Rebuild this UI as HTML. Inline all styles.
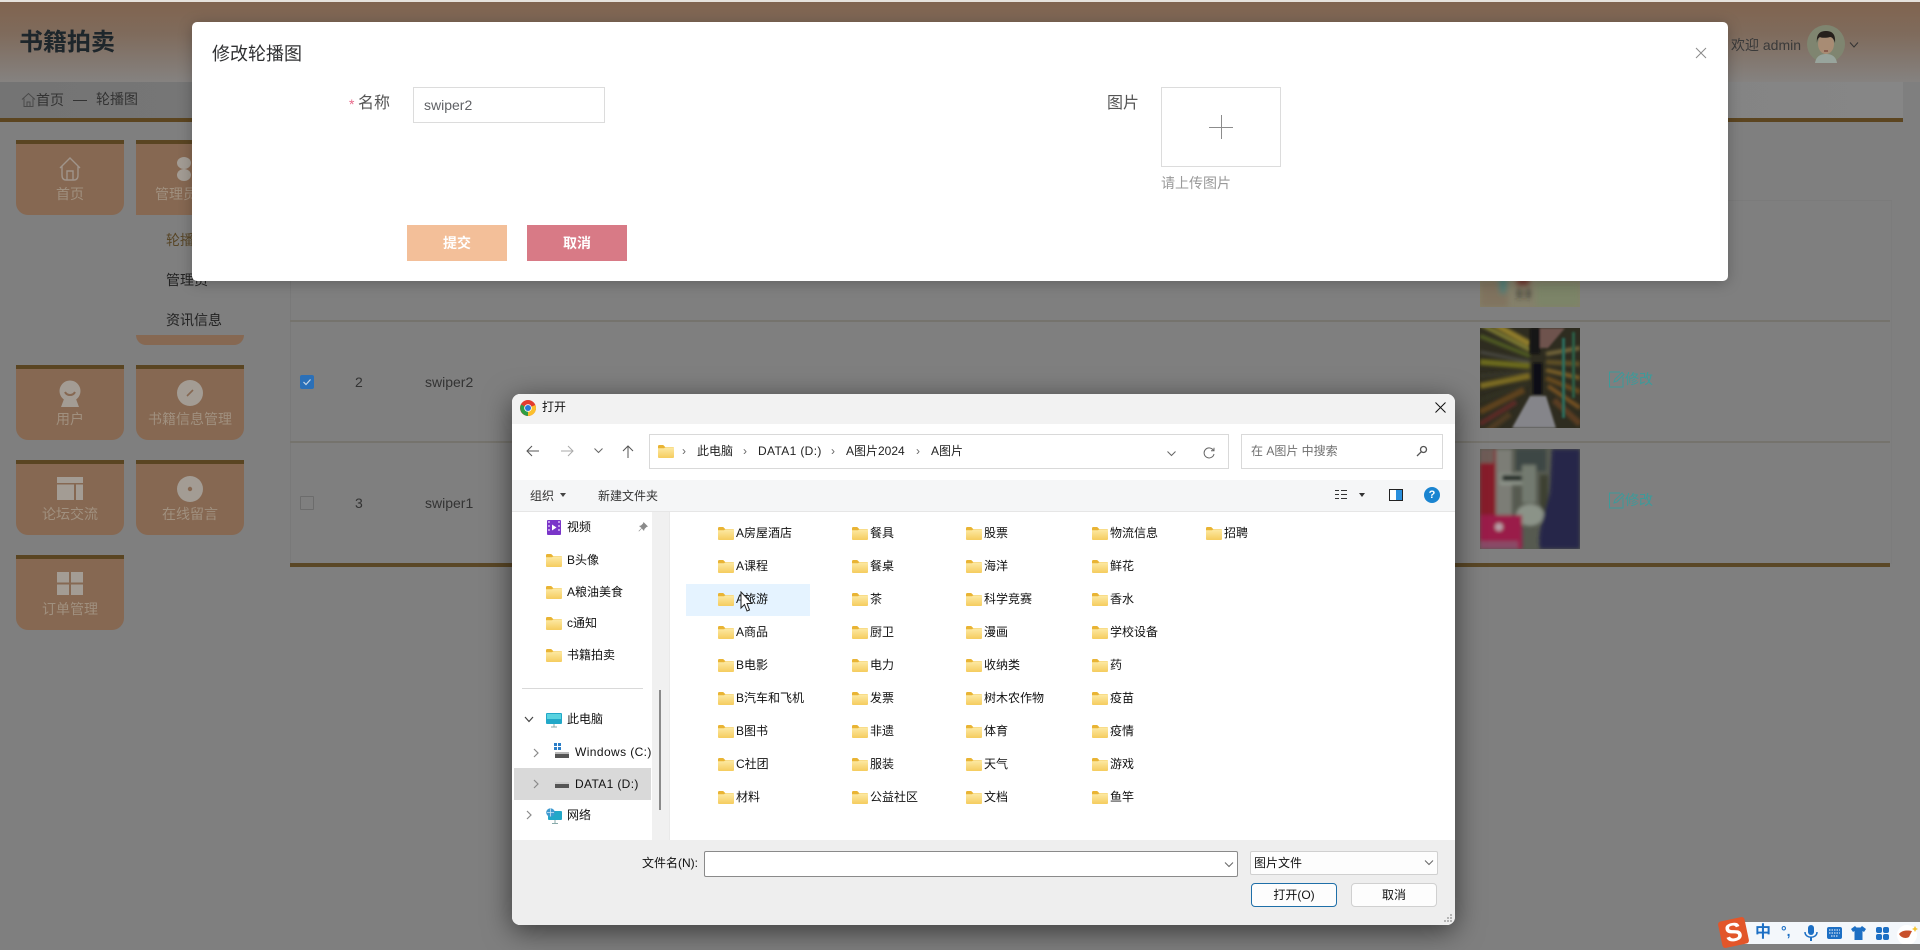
<!DOCTYPE html>
<html lang="zh"><head><meta charset="utf-8"><title>书籍拍卖</title>
<style>
*{box-sizing:border-box}
html,body{margin:0;padding:0}
body{width:1920px;height:944px;overflow:hidden;position:relative;background:#7f7f7f;font-family:"Liberation Sans","Noto Sans CJK SC",sans-serif;font-size:14px;color:#333}
.a{position:absolute}
.t{position:absolute;white-space:nowrap}
.tile{position:absolute;width:108px;height:75px;background:#866852;border-top:4px solid #5a4522;border-radius:0 0 12px 12px}
.tt{position:absolute;width:108px;text-align:center;color:#a0907f;font-size:14px;line-height:20px;white-space:nowrap}
.i{position:absolute;height:18px;line-height:18px;font-size:12px;color:#111;padding-left:18px;white-space:nowrap}
.i svg{position:absolute;left:0;top:3px;width:16px;height:13px}
.n{position:absolute;height:18px;line-height:18px;font-size:12px;color:#111;padding-left:21px;white-space:nowrap}
.n svg{position:absolute;left:0;top:3px;width:16px;height:13px}
.bc{position:absolute;font-size:12px;line-height:16px;color:#222;white-space:nowrap}
.sep{position:absolute;color:#666;font-size:12px;line-height:16px}
</style></head>
<body>
<svg width="0" height="0" style="position:absolute"><defs>
<linearGradient id="fg" x1="0" y1="0" x2="0" y2="1"><stop offset="0" stop-color="#fdeaa6"/><stop offset="1" stop-color="#f5cc5e"/></linearGradient>
<symbol id="fo" viewBox="0 0 16 13"><path d="M0 1.2C0 .5.5 0 1.2 0h4l2 2H15c.6 0 1 .4 1 1v1H0z" fill="#e9b434"/><path d="M0 3.2h6l1.5-1H16V12c0 .6-.4 1-1 1H1c-.6 0-1-.4-1-1z" fill="url(#fg)"/></symbol>
</defs></svg>

<!-- page background -->
<div class="a" style="left:0;top:0;width:1920px;height:2px;background:#e6e2dc"></div>
<div class="a" style="left:0;top:2px;width:1920px;height:80px;background:linear-gradient(180deg,#80644f 0%,#7f6b5c 40%,#858280 100%)"></div>
<div class="a" style="left:0;top:82px;width:1903px;height:36px;background:linear-gradient(90deg,#747474,#868686)"></div>
<div class="a" style="left:0;top:118px;width:1903px;height:4px;background:#5c4520"></div>
<div class="t" style="left:19px;top:26px;font-size:24px;font-weight:700;line-height:34px;color:#1e262b">书籍拍卖</div>
<svg class="a" style="left:21px;top:92px" width="15" height="16" viewBox="0 0 15 16" fill="none" stroke="#4a4a4a" stroke-width="1"><path d="M1 7.5 7.5 1.5 14 7.5M3 6.5V14.5H12V6.5M6 14.5V10H9V14.5"/></svg>
<div class="t" style="left:36px;top:90px;line-height:20px;color:#333">首页</div>
<div class="a" style="left:73px;top:100px;width:14px;height:1px;background:#333"></div>
<div class="t" style="left:96px;top:89px;line-height:20px;color:#333">轮播图</div>
<div class="t" style="left:1731px;top:35px;line-height:20px;color:#3a3a3a;font-size:14px">欢迎 admin</div>
<svg class="a" style="left:1807px;top:25px" width="38" height="38" viewBox="0 0 38 38"><circle cx="19" cy="19" r="19" fill="#7f8570"/><path d="M8 38c1-7 6-9 11-9s10 2 11 9z" fill="#98a49c"/><ellipse cx="19" cy="19" rx="8" ry="10" fill="#a88c74"/><path d="M10 18C9 8 14 6 19 6s10 2 9 12c-1-4-3-6-5-6-3 1-9 1-10 0-2 1-3 3-3 6z" fill="#26201c"/><path d="M17 26h4" stroke="#6a3028"/></svg>
<svg class="a" style="left:1849px;top:41px" width="10" height="8" viewBox="0 0 10 8" fill="none" stroke="#333"><path d="M1 1.5 5 6 9 1.5"/></svg>

<!-- sidebar -->
<div class="tile" style="left:16px;top:140px"></div>
<svg class="a" style="left:57px;top:156px" width="26" height="26" viewBox="0 0 26 26" fill="none" stroke="#a0948a" stroke-width="1.4"><path d="M3 12 13 2l10 10M5 10v9c0 3 1 5 4 5h8c3 0 4-2 4-5v-9M10 24v-9h6v9"/></svg>
<div class="tt" style="left:16px;top:184px">首页</div>
<div class="tile" style="left:136px;top:140px;border-radius:0"></div>
<div class="a" style="left:177px;top:157px;width:14px;height:12px;border-radius:50%;background:#a39c94"></div>
<div class="a" style="left:177px;top:169px;width:14px;height:12px;border-radius:50%;background:#a39c94"></div>
<div class="tt" style="left:136px;top:184px">管理员管理</div>
<div class="a" style="left:136px;top:335px;width:108px;height:10px;background:#866852;border-radius:0 0 12px 12px"></div>
<div class="t" style="left:166px;top:230px;line-height:20px;color:#584627">轮播图</div>
<div class="t" style="left:166px;top:270px;line-height:20px;color:#222">管理员</div>
<div class="t" style="left:166px;top:310px;line-height:20px;color:#222">资讯信息</div>

<div class="tile" style="left:16px;top:365px"></div>
<svg class="a" style="left:58px;top:380px" width="24" height="28" viewBox="0 0 24 28"><circle cx="12" cy="11" r="10.5" fill="#a39c94"/><path d="M6 19 3 27h18l-3-8z" fill="#a39c94"/><path d="M7 12c2 4 8 4 10 0" stroke="#866852" stroke-width="2" fill="none"/></svg>
<div class="tt" style="left:16px;top:409px">用户</div>
<div class="tile" style="left:136px;top:365px"></div>
<svg class="a" style="left:177px;top:380px" width="26" height="26" viewBox="0 0 26 26"><circle cx="13" cy="13" r="13" fill="#a39c94"/><path d="M10 16 16 10" stroke="#866852" stroke-width="1.6"/></svg>
<div class="tt" style="left:136px;top:409px">书籍信息管理</div>

<div class="tile" style="left:16px;top:460px"></div>
<svg class="a" style="left:57px;top:477px" width="26" height="23" viewBox="0 0 26 23" fill="#a39c94"><rect width="26" height="6"/><rect y="7.5" width="17" height="15.5"/><rect x="19" y="7.5" width="7" height="15.5"/></svg>
<div class="tt" style="left:16px;top:504px">论坛交流</div>
<div class="tile" style="left:136px;top:460px"></div>
<svg class="a" style="left:177px;top:476px" width="26" height="26" viewBox="0 0 26 26"><circle cx="13" cy="13" r="13" fill="#a39c94"/><circle cx="13" cy="13" r="2.2" fill="#866852"/></svg>
<div class="tt" style="left:136px;top:504px">在线留言</div>

<div class="tile" style="left:16px;top:555px"></div>
<svg class="a" style="left:57px;top:572px" width="26" height="23" viewBox="0 0 26 23" fill="#a39c94"><rect width="12" height="10.5"/><rect x="14" width="12" height="10.5"/><rect y="12.5" width="12" height="10.5"/><rect x="14" y="12.5" width="12" height="10.5"/></svg>
<div class="tt" style="left:16px;top:599px">订单管理</div>

<!-- table -->
<div class="a" style="left:290px;top:200px;width:1px;height:364px;background:#797979"></div>
<div class="a" style="left:1891px;top:200px;width:1px;height:364px;background:#7c7c7c"></div>
<div class="a" style="left:1728px;top:200px;width:164px;height:1px;background:#7b7b7b"></div>
<div class="a" style="left:290px;top:320px;width:1600px;height:2px;background:#75736d"></div>
<div class="a" style="left:290px;top:441px;width:1600px;height:2px;background:#75736d"></div>
<div class="a" style="left:290px;top:563px;width:1600px;height:4px;background:#5a4726"></div>

<div class="a" style="left:300px;top:375px;width:14px;height:14px;background:#2b70b8;border-radius:2px"></div>
<svg class="a" style="left:300px;top:375px" width="14" height="14" viewBox="0 0 14 14" fill="none" stroke="#c8d8e8" stroke-width="1.2"><path d="M3.5 7 6 9.5 10.5 4.5"/></svg>
<div class="a" style="left:300px;top:496px;width:14px;height:14px;border:1px solid #6c6c6c;border-radius:1px"></div>
<div class="t" style="left:355px;top:372px;line-height:20px;color:#333">2</div>
<div class="t" style="left:355px;top:493px;line-height:20px;color:#333">3</div>
<div class="t" style="left:425px;top:372px;line-height:20px;color:#333">swiper2</div>
<div class="t" style="left:425px;top:493px;line-height:20px;color:#333">swiper1</div>

<!-- thumbs -->
<svg class="a" style="left:1480px;top:207px" width="100" height="100" viewBox="0 0 100 100"><defs><filter id="b1" x="-10%" y="-10%" width="120%" height="120%"><feGaussianBlur stdDeviation="3"/></filter><clipPath id="c1"><rect width="100" height="100"/></clipPath></defs><g clip-path="url(#c1)"><rect width="100" height="100" fill="#84806a"/><g filter="url(#b1)"><rect x="0" y="74" width="28" height="26" fill="#80735f"/><rect x="56" y="76" width="44" height="24" fill="#7c8468"/><ellipse cx="23" cy="76" rx="4" ry="12" fill="#4f8078"/><rect x="37" y="70" width="12" height="8" fill="#70302a"/><rect x="38" y="82" width="3" height="9" fill="#2b2620"/><rect x="47" y="82" width="3" height="9" fill="#2b2620"/></g></g></svg>

<svg class="a" style="left:1480px;top:328px" width="100" height="100" viewBox="0 0 100 100"><defs><filter id="b2" x="-10%" y="-10%" width="120%" height="120%"><feGaussianBlur stdDeviation="1.6"/></filter><filter id="b2b" x="-10%" y="-10%" width="120%" height="120%"><feGaussianBlur stdDeviation="1"/></filter><clipPath id="c2"><rect width="100" height="100"/></clipPath></defs><g clip-path="url(#c2)"><rect width="100" height="100" fill="#2e2c20"/><g filter="url(#b2)" fill="none" stroke-width="4"><path d="M0 -4 50 22" stroke="#7d7a30"/><path d="M14 -4 50 16" stroke="#8f7c2a" stroke-width="6"/><path d="M0 8 50 28" stroke="#505c24"/><path d="M0 24 50 34" stroke="#4a4a42" stroke-width="3"/><path d="M0 34 50 38" stroke="#6c6a1e" stroke-width="6"/><path d="M0 48 50 44" stroke="#39382a" stroke-width="3"/><path d="M0 58 50 48" stroke="#7a6a20" stroke-width="6"/><path d="M0 72 48 56" stroke="#333224" stroke-width="3"/><path d="M0 84 44 62" stroke="#5f421e" stroke-width="6"/><path d="M0 96 36 74" stroke="#5c2a26" stroke-width="5"/><path d="M0 108 30 86" stroke="#4d3a20" stroke-width="6"/><path d="M100 20 66 26" stroke="#75663a"/><path d="M100 36 66 34" stroke="#5f5026" stroke-width="5"/><path d="M100 50 66 42" stroke="#7a5e26"/><path d="M100 64 66 50" stroke="#66481f" stroke-width="5"/><path d="M100 80 68 58" stroke="#785222"/><path d="M100 96 74 72" stroke="#5c3e20" stroke-width="6"/></g><g filter="url(#b2b)"><path d="M32 100 50 68H66L76 100z" fill="#85858a"/><path d="M50 0H60V26H50z" fill="#141416"/><path d="M60 0H85L68 20H60z" fill="#6e524e"/><path d="M82 10h3V90h-3z" fill="#2b6e5e"/><path d="M92 4h3V70h-3z" fill="#2a5e46"/><rect x="53" y="35" width="9" height="32" fill="#101014"/></g></g></svg>

<svg class="a" style="left:1480px;top:449px" width="100" height="100" viewBox="0 0 100 100"><defs><filter id="b3" x="-10%" y="-10%" width="120%" height="120%"><feGaussianBlur stdDeviation="1.8"/></filter><clipPath id="c3"><rect width="100" height="100"/></clipPath></defs><g clip-path="url(#c3)"><rect width="100" height="100" fill="#565a50"/><g filter="url(#b3)"><rect x="0" y="0" width="16" height="70" fill="#861c2c"/><rect x="0" y="0" width="14" height="14" fill="#6e5c56"/><rect x="16" y="0" width="16" height="70" fill="#7c7d76"/><rect x="36" y="0" width="30" height="22" fill="#3c4644"/><rect x="20" y="24" width="26" height="12" fill="#8e948a"/><rect x="22" y="26" width="20" height="6" fill="#1a2624"/><rect x="42" y="16" width="14" height="38" fill="#737a70"/><rect x="60" y="26" width="8" height="40" fill="#3c4030"/><ellipse cx="50" cy="66" rx="14" ry="11" fill="#8b9388"/><path d="M72 0h28v100H60C56 80 68 60 70 40z" fill="#26264a"/><rect x="0" y="66" width="42" height="34" fill="#9a1c48"/><rect x="0" y="92" width="38" height="8" fill="#8a4a66"/><circle cx="19" cy="78" r="4" fill="#b8a0a8"/></g></g></svg>

<svg class="a" style="left:1608px;top:371px" width="17" height="17" viewBox="0 0 17 17" fill="none" stroke="#3d9a9a" stroke-width="1"><path d="M12 1H1.500V16H15V6"/><path d="M6 11 7 8 14 1.500 16 3.500 9 10z"/></svg>
<div class="t" style="left:1625px;top:369px;line-height:20px;color:#3d9a9a">修改</div>
<svg class="a" style="left:1608px;top:492px" width="17" height="17" viewBox="0 0 17 17" fill="none" stroke="#3d9a9a" stroke-width="1"><path d="M12 1H1.500V16H15V6"/><path d="M6 11 7 8 14 1.500 16 3.500 9 10z"/></svg>
<div class="t" style="left:1625px;top:490px;line-height:20px;color:#3d9a9a">修改</div>

<!-- modal -->
<div class="a" style="left:192px;top:22px;width:1536px;height:259px;background:#fff;border-radius:5px;box-shadow:0 2px 14px rgba(0,0,0,.25)"></div>
<div class="t" style="left:212px;top:41px;font-size:18px;line-height:26px;color:#303133">修改轮播图</div>
<svg class="a" style="left:1695px;top:47px" width="12" height="12" viewBox="0 0 12 12" stroke="#8a8a8a" stroke-width="1"><path d="M1 1 11 11M11 1 1 11"/></svg>
<div class="t" style="left:349px;top:96px;line-height:16px;color:#e8698a;font-size:14px">*</div>
<div class="t" style="left:358px;top:93px;font-size:16px;line-height:22px;color:#555">名称</div>
<div class="a" style="left:413px;top:87px;width:192px;height:36px;border:1px solid #dcdcdc;background:#fff"></div>
<div class="t" style="left:424px;top:95px;line-height:20px;color:#606266">swiper2</div>
<div class="a" style="left:407px;top:225px;width:100px;height:36px;background:#f3bf99;color:#fff;font-weight:700;font-size:14px;line-height:36px;text-align:center">提交</div>
<div class="a" style="left:527px;top:225px;width:100px;height:36px;background:#d87a86;color:#fff;font-weight:700;font-size:14px;line-height:36px;text-align:center">取消</div>
<div class="t" style="left:1107px;top:93px;font-size:16px;line-height:22px;color:#555">图片</div>
<div class="a" style="left:1161px;top:87px;width:120px;height:80px;border:1px solid #dcdcdc;background:#fff"></div>
<div class="a" style="left:1209px;top:127px;width:24px;height:1px;background:#8c8c8c"></div>
<div class="a" style="left:1221px;top:115px;width:1px;height:24px;background:#8c8c8c"></div>
<div class="t" style="left:1161px;top:173px;line-height:20px;color:#999">请上传图片</div>

<!-- file dialog -->
<div class="a" style="left:512px;top:394px;width:943px;height:531px;background:#fff;border-radius:8px;box-shadow:0 6px 28px rgba(0,0,0,.55);overflow:hidden">
<div class="a" style="left:0;top:0;width:943px;height:30px;background:#f2f2f2"></div>
<div class="a" style="left:0;top:86px;width:943px;height:32px;background:#f5f6f7;border-bottom:1px solid #e6e6e6"></div>
<div class="a" style="left:140px;top:118px;width:18px;height:328px;background:#f0f0f0;border-right:1px solid #e9e9e9"></div>
<div class="a" style="left:147px;top:296px;width:2px;height:120px;background:#8a8a8a"></div>
<div class="a" style="left:0;top:446px;width:943px;height:85px;background:#eeeeee"></div>
</div>
<!-- chrome icon -->
<svg class="a" style="left:520px;top:400px" width="16" height="16" viewBox="0 0 16 16"><circle cx="8" cy="8" r="8" fill="#e33b2e"/><path d="M8 8 1 4.500A8 8 0 0 0 8 16z" fill="#2f9e44"/><path d="M8 8V16A8 8 0 0 0 15.400 5z" fill="#fbc02d"/><circle cx="8" cy="8" r="3.800" fill="#fff"/><circle cx="8" cy="8" r="3" fill="#2b78d8"/></svg>
<div class="t" style="left:542px;top:399px;font-size:12px;line-height:16px;color:#111">打开</div>
<svg class="a" style="left:1435px;top:402px" width="11" height="11" viewBox="0 0 11 11" stroke="#111" stroke-width="1"><path d="M.5.5 10.500 10.500M10.500.5.5 10.500"/></svg>

<!-- nav arrows -->
<svg class="a" style="left:526px;top:445px" width="13" height="12" viewBox="0 0 13 12" fill="none" stroke="#555" stroke-width="1"><path d="M6 1 1 6l5 5M1 6h12"/></svg>
<svg class="a" style="left:561px;top:445px" width="13" height="12" viewBox="0 0 13 12" fill="none" stroke="#aaa" stroke-width="1"><path d="M7 1l5 5-5 5M12 6H0"/></svg>
<svg class="a" style="left:594px;top:448px" width="9" height="6" viewBox="0 0 9 6" fill="none" stroke="#666"><path d="M.5.5 4.500 4.500 8.500.5"/></svg>
<svg class="a" style="left:622px;top:445px" width="12" height="13" viewBox="0 0 12 13" fill="none" stroke="#555"><path d="M1 6l5-5 5 5M6 1v12"/></svg>
<div class="a" style="left:649px;top:434px;width:580px;height:35px;border:1px solid #d9d9d9;background:#fff"></div>
<svg class="a" style="left:658px;top:445px;width:16px;height:13px"><use href="#fo"/></svg>
<div class="sep" style="left:682px;top:443px">›</div>
<div class="bc" style="left:697px;top:443px">此电脑</div>
<div class="sep" style="left:743px;top:443px">›</div>
<div class="bc" style="left:758px;top:443px;letter-spacing:.35px">DATA1 (D:)</div>
<div class="sep" style="left:831px;top:443px">›</div>
<div class="bc" style="left:846px;top:443px">A图片2024</div>
<div class="sep" style="left:916px;top:443px">›</div>
<div class="bc" style="left:931px;top:443px">A图片</div>
<svg class="a" style="left:1167px;top:451px" width="9" height="6" viewBox="0 0 9 6" fill="none" stroke="#666"><path d="M.5.5 4.500 4.500 8.500.5"/></svg>
<svg class="a" style="left:1203px;top:447px" width="12" height="12" viewBox="0 0 12 12" fill="none" stroke="#666"><path d="M10.500 3.500A5 5 0 1 0 11 7M11 .8V3.800H8"/></svg>
<div class="a" style="left:1241px;top:434px;width:202px;height:35px;border:1px solid #d9d9d9;background:#fff"></div>
<div class="t" style="left:1251px;top:443px;font-size:12px;line-height:16px;color:#6f6f6f">在 A图片 中搜索</div>
<svg class="a" style="left:1416px;top:445px" width="12" height="12" viewBox="0 0 12 12" fill="none" stroke="#555" stroke-width="1.300"><circle cx="7.500" cy="4.500" r="3"/><path d="M5.200 6.800 1 11"/></svg>
<div class="t" style="left:530px;top:488px;font-size:12px;line-height:16px;color:#333">组织</div>
<div class="a" style="left:560px;top:493px;border-left:3.500px solid transparent;border-right:3.500px solid transparent;border-top:4px solid #444"></div>
<div class="t" style="left:598px;top:488px;font-size:12px;line-height:16px;color:#333">新建文件夹</div>
<svg class="a" style="left:1335px;top:489px" width="12" height="12" viewBox="0 0 12 12" stroke="#333"><path d="M0 1.500h4M0 5.500h4M0 9.500h4M6 1.500h6M6 5.500h6M6 9.500h6"/></svg>
<div class="a" style="left:1359px;top:493px;border-left:3.500px solid transparent;border-right:3.500px solid transparent;border-top:4px solid #333"></div>
<div class="a" style="left:1389px;top:489px;width:14px;height:12px;border:1px solid #222;background:linear-gradient(90deg,#fff 50%,#2a8fdc 50%)"></div>
<div class="a" style="left:1424px;top:487px;width:16px;height:16px;border-radius:50%;background:#1a84d0;color:#fff;font-size:11px;font-weight:700;line-height:16px;text-align:center">?</div>

<!-- nav pane -->
<svg class="a" style="left:547px;top:520px" width="14" height="15" viewBox="0 0 14 15"><rect width="14" height="15" rx="1" fill="#7a35c9"/><path d="M1 2h2M1 6h2M1 10h2M11 2h2M11 6h2M11 10h2" stroke="#d7b8f5" stroke-width="1.600"/><path d="M5 4.500v6l4.500-3z" fill="#fff"/></svg>
<div class="t" style="left:567px;top:518px;font-size:12px;line-height:18px;color:#111">视频</div>
<svg class="a" style="left:638px;top:522px" width="10" height="10" viewBox="0 0 10 10" fill="#8a8a8a"><path d="M5.500 0 10 4.500 8.500 5 6.500 7 6 9 3.800 6.500 1 9.500.5 9 3.500 6 1 4 3 3.500 5 1.500z"/></svg>
<div class="n" style="left:546px;top:551px"><svg><use href="#fo"/></svg>B头像</div>
<div class="n" style="left:546px;top:583px"><svg><use href="#fo"/></svg>A粮油美食</div>
<div class="n" style="left:546px;top:614px"><svg><use href="#fo"/></svg>c通知</div>
<div class="n" style="left:546px;top:646px"><svg><use href="#fo"/></svg>书籍拍卖</div>
<div class="a" style="left:522px;top:688px;width:121px;height:1px;background:#d9d9d9"></div>
<svg class="a" style="left:524px;top:716px" width="10" height="7" viewBox="0 0 10 7" fill="none" stroke="#444" stroke-width="1.200"><path d="M1 1 5 5.500 9 1"/></svg>
<svg class="a" style="left:546px;top:713px" width="16" height="15" viewBox="0 0 16 15"><rect width="16" height="11" rx="1" fill="#22a8c8"/><rect x="1" y="1" width="14" height="5" fill="#59d3e0"/><path d="M8 11v3M5 14h6" stroke="#8aa" stroke-width="1"/></svg>
<div class="t" style="left:567px;top:710px;font-size:12px;line-height:18px;color:#111">此电脑</div>
<svg class="a" style="left:533px;top:748px" width="6" height="10" viewBox="0 0 6 10" fill="none" stroke="#8a8a8a" stroke-width="1.200"><path d="M1 1 5 5 1 9"/></svg>
<svg class="a" style="left:554px;top:743px" width="15" height="15" viewBox="0 0 15 15"><path d="M0 0h3v3H0zM4 0h3v3H4zM0 4h3v3H0zM4 4h3v3H4z" fill="#2a7ec8"/><rect x="1" y="9" width="14" height="6" fill="#555"/><rect x="1" y="9" width="14" height="2" fill="#bbb"/></svg>
<div class="t" style="left:575px;top:743px;font-size:12px;line-height:18px;color:#111;width:77px;overflow:hidden;letter-spacing:.4px">Windows (C:)</div>
<div class="a" style="left:514px;top:768px;width:137px;height:32px;background:#d9d9d9"></div>
<svg class="a" style="left:533px;top:779px" width="6" height="10" viewBox="0 0 6 10" fill="none" stroke="#8a8a8a" stroke-width="1.200"><path d="M1 1 5 5 1 9"/></svg>
<svg class="a" style="left:555px;top:782px" width="14" height="6" viewBox="0 0 14 6"><rect width="14" height="6" fill="#555"/><rect width="14" height="2" fill="#ccc"/></svg>
<div class="t" style="left:575px;top:775px;font-size:12px;line-height:18px;color:#111;letter-spacing:.35px">DATA1 (D:)</div>
<svg class="a" style="left:526px;top:810px" width="6" height="10" viewBox="0 0 6 10" fill="none" stroke="#8a8a8a" stroke-width="1.200"><path d="M1 1 5 5 1 9"/></svg>
<svg class="a" style="left:546px;top:808px" width="16" height="16" viewBox="0 0 16 16"><rect x="2" y="3" width="14" height="9" rx="1" fill="#22a8c8"/><path d="M9 12v3M6 15.500h6" stroke="#8aa"/><circle cx="4.500" cy="4.500" r="4.300" fill="#3f9ad0"/><path d="M1 4.500h7M4.500 .5v8" stroke="#cfe8f5" stroke-width=".8"/></svg>
<div class="t" style="left:567px;top:806px;font-size:12px;line-height:18px;color:#111">网络</div>

<!-- file list -->
<div class="a" style="left:686px;top:584px;width:124px;height:32px;background:#e5f3ff"></div>
<div class="i" style="left:718px;top:524px"><svg><use href="#fo"/></svg>A房屋酒店</div>
<div class="i" style="left:718px;top:557px"><svg><use href="#fo"/></svg>A课程</div>
<div class="i" style="left:718px;top:590px"><svg><use href="#fo"/></svg>A旅游</div>
<div class="i" style="left:718px;top:623px"><svg><use href="#fo"/></svg>A商品</div>
<div class="i" style="left:718px;top:656px"><svg><use href="#fo"/></svg>B电影</div>
<div class="i" style="left:718px;top:689px"><svg><use href="#fo"/></svg>B汽车和飞机</div>
<div class="i" style="left:718px;top:722px"><svg><use href="#fo"/></svg>B图书</div>
<div class="i" style="left:718px;top:755px"><svg><use href="#fo"/></svg>C社团</div>
<div class="i" style="left:718px;top:788px"><svg><use href="#fo"/></svg>材料</div>

<div class="i" style="left:852px;top:524px"><svg><use href="#fo"/></svg>餐具</div>
<div class="i" style="left:852px;top:557px"><svg><use href="#fo"/></svg>餐桌</div>
<div class="i" style="left:852px;top:590px"><svg><use href="#fo"/></svg>茶</div>
<div class="i" style="left:852px;top:623px"><svg><use href="#fo"/></svg>厨卫</div>
<div class="i" style="left:852px;top:656px"><svg><use href="#fo"/></svg>电力</div>
<div class="i" style="left:852px;top:689px"><svg><use href="#fo"/></svg>发票</div>
<div class="i" style="left:852px;top:722px"><svg><use href="#fo"/></svg>非遗</div>
<div class="i" style="left:852px;top:755px"><svg><use href="#fo"/></svg>服装</div>
<div class="i" style="left:852px;top:788px"><svg><use href="#fo"/></svg>公益社区</div>

<div class="i" style="left:966px;top:524px"><svg><use href="#fo"/></svg>股票</div>
<div class="i" style="left:966px;top:557px"><svg><use href="#fo"/></svg>海洋</div>
<div class="i" style="left:966px;top:590px"><svg><use href="#fo"/></svg>科学竞赛</div>
<div class="i" style="left:966px;top:623px"><svg><use href="#fo"/></svg>漫画</div>
<div class="i" style="left:966px;top:656px"><svg><use href="#fo"/></svg>收纳类</div>
<div class="i" style="left:966px;top:689px"><svg><use href="#fo"/></svg>树木农作物</div>
<div class="i" style="left:966px;top:722px"><svg><use href="#fo"/></svg>体育</div>
<div class="i" style="left:966px;top:755px"><svg><use href="#fo"/></svg>天气</div>
<div class="i" style="left:966px;top:788px"><svg><use href="#fo"/></svg>文档</div>

<div class="i" style="left:1092px;top:524px"><svg><use href="#fo"/></svg>物流信息</div>
<div class="i" style="left:1092px;top:557px"><svg><use href="#fo"/></svg>鲜花</div>
<div class="i" style="left:1092px;top:590px"><svg><use href="#fo"/></svg>香水</div>
<div class="i" style="left:1092px;top:623px"><svg><use href="#fo"/></svg>学校设备</div>
<div class="i" style="left:1092px;top:656px"><svg><use href="#fo"/></svg>药</div>
<div class="i" style="left:1092px;top:689px"><svg><use href="#fo"/></svg>疫苗</div>
<div class="i" style="left:1092px;top:722px"><svg><use href="#fo"/></svg>疫情</div>
<div class="i" style="left:1092px;top:755px"><svg><use href="#fo"/></svg>游戏</div>
<div class="i" style="left:1092px;top:788px"><svg><use href="#fo"/></svg>鱼竿</div>

<div class="i" style="left:1206px;top:524px"><svg><use href="#fo"/></svg>招聘</div>

<svg class="a" style="left:740px;top:591px" width="13" height="21" viewBox="0 0 13 21"><path d="M1 1V17L4.500 13.500 7 20 9.500 19 7 12.500H12z" fill="#fff" stroke="#222" stroke-width="1"/></svg>

<!-- bottom bar -->
<div class="t" style="left:642px;top:855px;font-size:12px;line-height:16px;color:#111">文件名(N):</div>
<div class="a" style="left:704px;top:851px;width:534px;height:26px;background:#fff;border:1px solid #8a8a8a;border-radius:2px"></div>
<svg class="a" style="left:1224px;top:862px" width="10" height="6" viewBox="0 0 10 6" fill="none" stroke="#666"><path d="M1 .5 5 4.500 9 .5"/></svg>
<div class="a" style="left:1250px;top:851px;width:188px;height:24px;background:#fdfdfd;border:1px solid #d0d0d0;border-radius:2px"></div>
<div class="t" style="left:1254px;top:855px;font-size:12px;line-height:16px;color:#111">图片文件</div>
<svg class="a" style="left:1424px;top:860px" width="10" height="6" viewBox="0 0 10 6" fill="none" stroke="#666"><path d="M1 .5 5 4.500 9 .5"/></svg>
<div class="a" style="left:1251px;top:883px;width:86px;height:24px;background:#fdfdfd;border:1px solid #1f6fa8;border-radius:4px;font-size:12px;line-height:22px;text-align:center;color:#111">打开(O)</div>
<div class="a" style="left:1351px;top:883px;width:86px;height:24px;background:#fdfdfd;border:1px solid #d0d0d0;border-radius:4px;font-size:12px;line-height:22px;text-align:center;color:#111">取消</div>
<svg class="a" style="left:1443px;top:913px" width="10" height="10" viewBox="0 0 10 10" fill="#b5b5b5"><rect x="7" y="1" width="2" height="2"/><rect x="4" y="4" width="2" height="2"/><rect x="7" y="4" width="2" height="2"/><rect x="1" y="7" width="2" height="2"/><rect x="4" y="7" width="2" height="2"/><rect x="7" y="7" width="2" height="2"/></svg>

<!-- IME bar -->
<div class="a" style="left:1743px;top:922px;width:177px;height:22px;background:#f3f7fb"></div>
<div class="a" style="left:1720px;top:919px;width:27px;height:27px;background:#e2562a;transform:rotate(-12deg);border-radius:3px;color:#fff;font-weight:700;font-size:26px;line-height:27px;text-align:center">S</div>
<div class="t" style="left:1755px;top:924px;font-size:16px;font-weight:700;line-height:18px;color:#1c6fc4">中</div>
<div class="t" style="left:1781px;top:922px;font-size:14px;font-weight:700;line-height:18px;color:#1c6fc4">°,</div>
<svg class="a" style="left:1804px;top:925px" width="14" height="17" viewBox="0 0 14 17" fill="#1c6fc4"><rect x="4" y="0" width="6" height="10" rx="3"/><path d="M1 7c0 7 12 7 12 0" fill="none" stroke="#1c6fc4" stroke-width="1.500"/><rect x="6" y="12" width="2" height="4"/></svg>
<svg class="a" style="left:1827px;top:927px" width="15" height="12" viewBox="0 0 15 12"><rect width="15" height="12" rx="2" fill="#1c6fc4"/><path d="M2 3h11M2 6h11M4 9h7" stroke="#fff" stroke-dasharray="1.500 1"/></svg>
<svg class="a" style="left:1851px;top:926px" width="15" height="14" viewBox="0 0 15 14" fill="#1c6fc4"><path d="M4 0 0 3l2 3 1.500-1V14h8V5L13 6l2-3-4-3-1.500 1.500h-4z"/></svg>
<svg class="a" style="left:1876px;top:927px" width="13" height="13" viewBox="0 0 13 13" fill="#1c6fc4"><rect width="6" height="6" rx="2"/><rect x="7" width="6" height="6" rx="2"/><rect y="7" width="6" height="6" rx="2"/><rect x="7" y="7" width="6" height="6" rx="2"/></svg>
<svg class="a" style="left:1896px;top:924px" width="22" height="20" viewBox="0 0 22 20"><circle cx="11" cy="11" r="10" fill="#fff"/><path d="M3 10c3-4 9-4 13-3l-3 6c-3 2-8 1-10-3z" fill="#c8502c"/><path d="M19 2l1 2 2 1-2 1-1 2-1-2-2-1 2-1z" fill="#f4c430"/></svg>
</body></html>
